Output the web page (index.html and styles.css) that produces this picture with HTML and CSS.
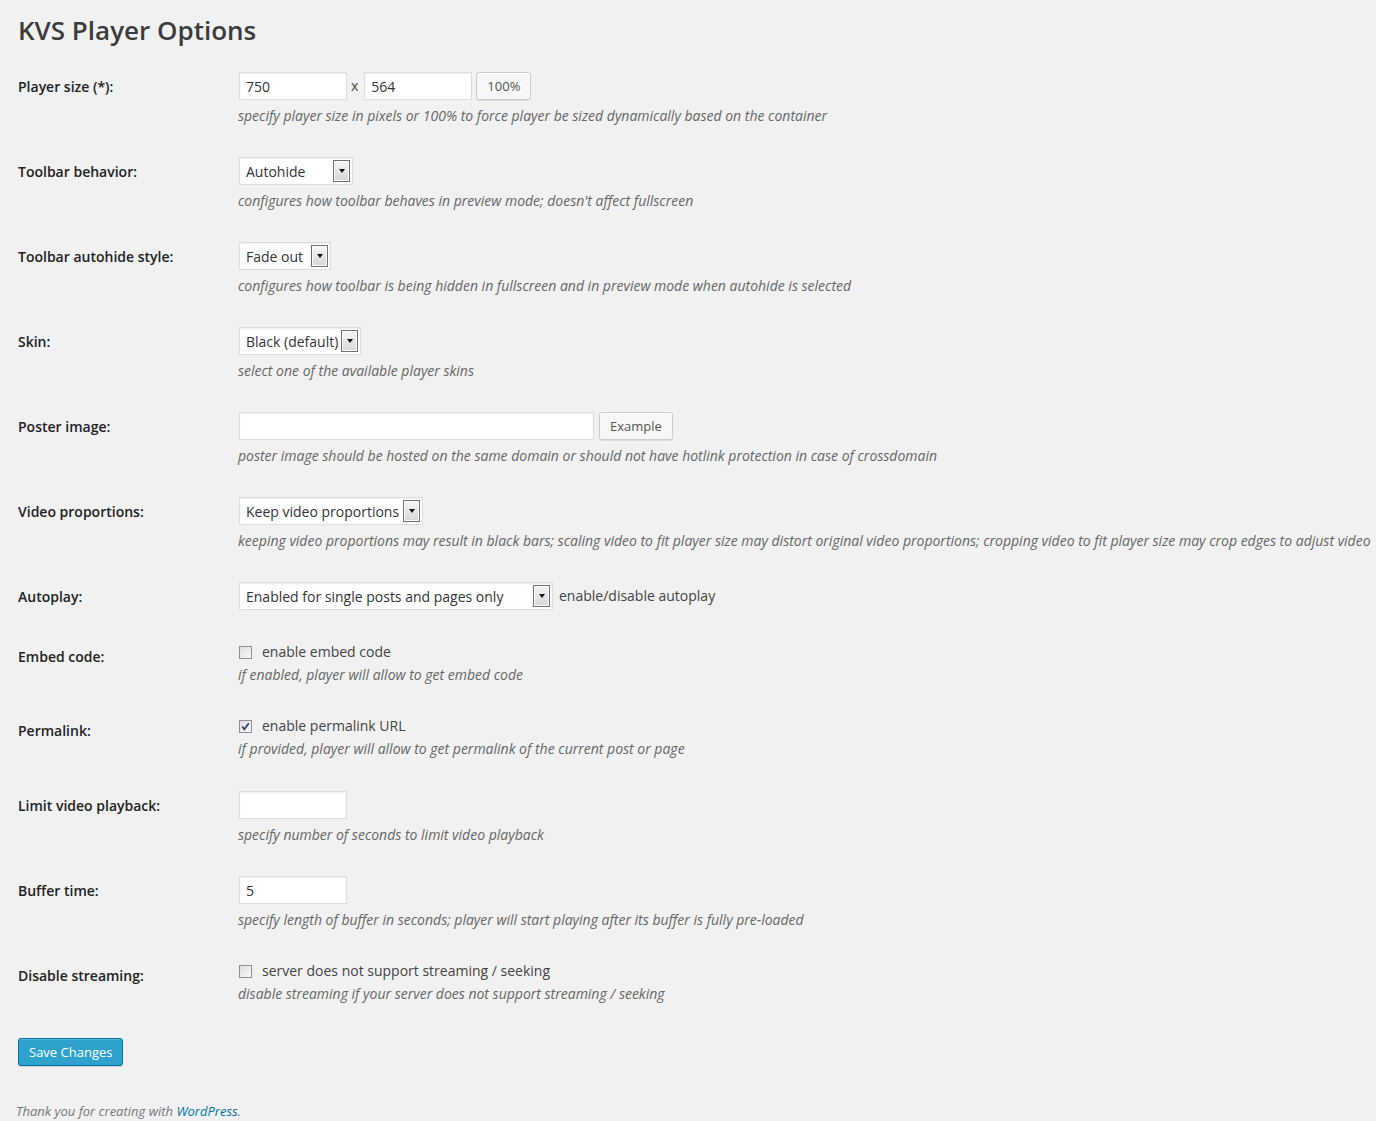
FILE: index.html
```html
<!DOCTYPE html>
<html lang="en">
<head>
<meta charset="utf-8">
<title>KVS Player Options</title>
<link rel="stylesheet" href="styles.css">
</head>
<body>
<div class="wrap">
  <h1 class="title">KVS Player Options</h1>
  <form class="form-table">
    <div class="row">
      <div class="row-label">Player size (*):</div>
      <div class="row-field">
        <div class="controls">
          <input class="text w-small" type="text" value="750">
          <span class="sep">x</span>
          <input class="text w-small" type="text" value="564">
          <button type="button" class="btn btn-after">100%</button>
        </div>
        <p class="description">specify player size in pixels or 100% to force player be sized dynamically based on the container</p>
      </div>
    </div>

    <div class="row">
      <div class="row-label">Toolbar behavior:</div>
      <div class="row-field">
        <div class="controls">
          <span class="sel w-autohide"><select><option>Autohide</option></select></span>
        </div>
        <p class="description">configures how toolbar behaves in preview mode; doesn't affect fullscreen</p>
      </div>
    </div>

    <div class="row">
      <div class="row-label">Toolbar autohide style:</div>
      <div class="row-field">
        <div class="controls">
          <span class="sel w-fade"><select><option>Fade out</option></select></span>
        </div>
        <p class="description">configures how toolbar is being hidden in fullscreen and in preview mode when autohide is selected</p>
      </div>
    </div>

    <div class="row">
      <div class="row-label">Skin:</div>
      <div class="row-field">
        <div class="controls">
          <span class="sel w-skin"><select><option>Black (default)</option></select></span>
        </div>
        <p class="description">select one of the available player skins</p>
      </div>
    </div>

    <div class="row">
      <div class="row-label">Poster image:</div>
      <div class="row-field">
        <div class="controls">
          <input class="text w-wide" type="text" value="">
          <button type="button" class="btn btn-example">Example</button>
        </div>
        <p class="description">poster image should be hosted on the same domain or should not have hotlink protection in case of crossdomain</p>
      </div>
    </div>

    <div class="row">
      <div class="row-label">Video proportions:</div>
      <div class="row-field">
        <div class="controls">
          <span class="sel w-prop"><select><option>Keep video proportions</option></select></span>
        </div>
        <p class="description">keeping video proportions may result in black bars; scaling video to fit player size may distort original video proportions; cropping video to fit player size may crop edges to adjust video</p>
      </div>
    </div>

    <div class="row">
      <div class="row-label">Autoplay:</div>
      <div class="row-field field-nodesc">
        <div class="controls">
          <span class="sel w-auto"><select><option>Enabled for single posts and pages only</option></select></span>
          <span class="inline-note">enable/disable autoplay</span>
        </div>
      </div>
    </div>

    <div class="row">
      <div class="row-label">Embed code:</div>
      <div class="row-field field-check">
        <label class="check-line"><span class="cb"></span><span class="cb-text">enable embed code</span></label>
        <p class="description desc-check">if enabled, player will allow to get embed code</p>
      </div>
    </div>

    <div class="row">
      <div class="row-label">Permalink:</div>
      <div class="row-field field-check field-check-tall">
        <label class="check-line"><span class="cb"><svg viewBox="0 0 11 11" width="11" height="11"><path d="M2.2 5.6 L4.3 8.3 L8.8 2.2" fill="none" stroke="#2f3a73" stroke-width="1.7"/></svg></span><span class="cb-text">enable permalink URL</span></label>
        <p class="description desc-check">if provided, player will allow to get permalink of the current post or page</p>
      </div>
    </div>

    <div class="row">
      <div class="row-label">Limit video playback:</div>
      <div class="row-field">
        <div class="controls">
          <input class="text w-small" type="text" value="">
        </div>
        <p class="description">specify number of seconds to limit video playback</p>
      </div>
    </div>

    <div class="row">
      <div class="row-label">Buffer time:</div>
      <div class="row-field">
        <div class="controls">
          <input class="text w-small" type="text" value="5">
        </div>
        <p class="description">specify length of buffer in seconds; player will start playing after its buffer is fully pre-loaded</p>
      </div>
    </div>

    <div class="row">
      <div class="row-label">Disable streaming:</div>
      <div class="row-field field-check">
        <label class="check-line"><span class="cb"></span><span class="cb-text">server does not support streaming / seeking</span></label>
        <p class="description desc-check">disable streaming if your server does not support streaming / seeking</p>
      </div>
    </div>

    <p class="submit"><button type="button" class="btn btn-primary">Save Changes</button></p>
  </form>
</div>
<p class="footer">Thank you for creating with <a href="#">WordPress</a>.</p>
</body>
</html>
```
FILE: styles.css
```css
html, body {
  margin: 0;
  padding: 0;
  background: #f1f1f1;
  overflow-x: hidden;
}
body {
  font-family: "Open Sans", "Noto Sans", sans-serif;
  font-size: 14px;
  line-height: 20px;
  color: #444;
}
.wrap {
  padding: 8px 0 0 18px;
}
.title {
  margin: 0;
  padding: 7px 0 5px;
  font-size: 26px;
  font-weight: 600;
  line-height: 30px;
  color: #3c3c3c;
}
.form-table {
  margin-top: 7px;
}
.row {
  display: grid;
  grid-template-columns: 220px 1fr;
}
.row-label {
  padding-top: 21px;
  line-height: 18px;
  font-weight: 600;
  color: #222;
}
.row-field {
  padding: 15px 0 16px;
  min-width: 0;
}
.row-field.field-nodesc {
  padding-bottom: 17px;
}
.row-field.field-check-tall {
  padding-bottom: 17px;
}
.controls {
  display: flex;
  align-items: center;
  height: 28px;
}
.text {
  box-sizing: border-box;
  height: 28px;
  margin: 0 0 0 1px;
  padding: 0 6px;
  border: 1px solid #ddd;
  background: #fff;
  box-shadow: inset 0 1px 2px rgba(0, 0, 0, 0.07);
  font-family: inherit;
  font-size: 14px;
  color: #333;
  outline: none;
}
.w-small { width: 108px; }
.w-wide { width: 355px; }
.sep {
  margin: 0 5px 0 4px;
  color: #444;
}
.btn {
  box-sizing: border-box;
  height: 28px;
  padding: 0 10px;
  border: 1px solid #ccc;
  border-radius: 3px;
  background: #f7f7f7;
  color: #555;
  font-family: inherit;
  font-size: 13px;
  line-height: 26px;
  box-shadow: inset 0 1px 0 #fff, 0 1px 0 rgba(0, 0, 0, 0.08);
  cursor: pointer;
  margin-top: -1px;
}
.btn-after { margin-left: 4px; }
.btn-example { margin-left: 5px; }
.btn-primary {
  background: #2ea2cc;
  border-color: #0074a2;
  color: #fff;
  box-shadow: inset 0 1px 0 rgba(120, 200, 230, 0.5), 0 1px 0 rgba(0, 0, 0, 0.15);
  margin: 0;
}
.sel {
  position: relative;
  display: inline-block;
  box-sizing: border-box;
  height: 28px;
  margin-left: 1px;
  border: 1px solid #ddd;
  background: #fff;
  box-shadow: inset 0 1px 2px rgba(0, 0, 0, 0.07);
}
.sel select {
  -webkit-appearance: none;
  appearance: none;
  display: block;
  width: 100%;
  height: 26px;
  margin: 0;
  padding: 0 0 0 6px;
  border: 0;
  background: transparent;
  font-family: inherit;
  font-size: 14px;
  color: #333;
  outline: none;
}
.sel::before {
  content: "";
  position: absolute;
  right: 2px;
  top: 2px;
  width: 17px;
  height: 22px;
  box-sizing: border-box;
  border: 1px solid #707070;
  background: linear-gradient(#f6f6f6, #d6d6d6);
  box-shadow: inset 0 0 0 1px #fbfbfb;
  pointer-events: none;
}
.sel::after {
  content: "";
  position: absolute;
  right: 7px;
  top: 11px;
  width: 0;
  height: 0;
  border-left: 3.5px solid transparent;
  border-right: 3.5px solid transparent;
  border-top: 4px solid #111;
  pointer-events: none;
}
.w-autohide { width: 114px; }
.w-fade { width: 92px; }
.w-skin { width: 122px; }
.w-prop { width: 184px; }
.w-auto { width: 314px; }
.inline-note {
  margin-left: 6px;
  color: #444;
}
.check-line {
  display: flex;
  align-items: center;
  height: 20px;
  color: #444;
}
.cb {
  box-sizing: border-box;
  width: 13px;
  height: 13px;
  margin-left: 1px;
  border: 1px solid #8f8f8f;
  background: linear-gradient(135deg, #dcdcdc, #fbfbfb);
  display: flex;
  align-items: center;
  justify-content: center;
}
.cb svg { display: block; }
.cb-text {
  margin-left: 10px;
}
.description {
  margin: 6px 0 0;
  font-style: italic;
  color: #666;
  line-height: 20px;
  white-space: nowrap;
}
.description.desc-check {
  margin-top: 3px;
}
.submit {
  margin: 18px 0 0;
  padding: 0;
}
.footer {
  margin: 35px 0 0;
  padding-left: 16px;
  font-size: 13px;
  font-style: italic;
  line-height: 20px;
  color: #777;
}
.footer a {
  color: #0074a2;
  text-decoration: none;
}
```
